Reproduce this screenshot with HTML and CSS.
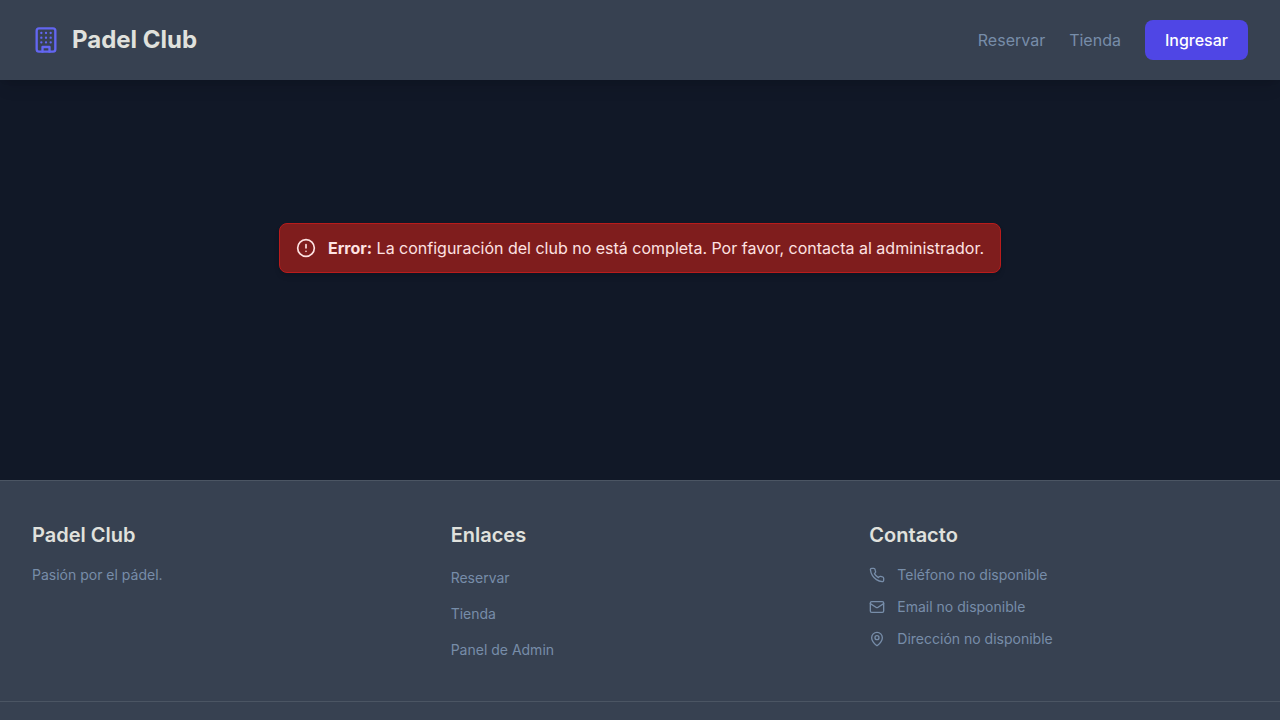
FILE: index.html
```html
<!DOCTYPE html>
<html lang="es">
<head>
<meta charset="utf-8">
<meta name="viewport" content="width=device-width, initial-scale=1">
<title>Padel Club</title>
<link rel="stylesheet" href="styles.css">
</head>
<body>
<header class="header">
  <a class="brand" href="#">
    <svg class="icon brand-icon" viewBox="0 0 24 24" aria-hidden="true"><rect x="4" y="2" width="16" height="20" rx="2" ry="2"/><path d="M9 22v-4h6v4M8 6h.01M16 6h.01M12 6h.01M12 10h.01M12 14h.01M16 10h.01M16 14h.01M8 10h.01M8 14h.01"/></svg>
    <span>Padel Club</span>
  </a>
  <nav class="nav">
    <a class="nav-link" href="#">Reservar</a>
    <a class="nav-link" href="#">Tienda</a>
    <button class="button" type="button">Ingresar</button>
  </nav>
</header>
<main class="main">
  <div class="alert" role="alert">
    <svg class="icon alert-icon" viewBox="0 0 24 24" aria-hidden="true"><circle cx="12" cy="12" r="10"/><path d="M12 8v4M12 16h.01"/></svg>
    <p class="alert-text"><strong>Error:</strong> La configuración del club no está completa. Por favor, contacta al administrador.</p>
  </div>
</main>
<footer class="footer">
  <div class="footer-grid">
    <section>
      <h2 class="footer-title">Padel Club</h2>
      <p class="footer-text">Pasión por el pádel.</p>
    </section>
    <section>
      <h2 class="footer-title">Enlaces</h2>
      <ul class="list">
        <li class="link-item"><a class="footer-link" href="#">Reservar</a></li>
        <li class="link-item"><a class="footer-link" href="#">Tienda</a></li>
        <li class="link-item"><a class="footer-link" href="#">Panel de Admin</a></li>
      </ul>
    </section>
    <section>
      <h2 class="footer-title">Contacto</h2>
      <ul class="list">
        <li class="contact"><svg class="icon contact-icon" viewBox="0 0 24 24" aria-hidden="true"><path d="M22 16.92v3a2 2 0 0 1-2.18 2 19.79 19.79 0 0 1-8.63-3.07 19.5 19.5 0 0 1-6-6 19.79 19.79 0 0 1-3.07-8.67A2 2 0 0 1 4.11 2h3a2 2 0 0 1 2 1.72 12.84 12.84 0 0 0 .7 2.81 2 2 0 0 1-.45 2.11L8.09 9.91a16 16 0 0 0 6 6l1.27-1.27a2 2 0 0 1 2.11-.45 12.84 12.84 0 0 0 2.81.7A2 2 0 0 1 22 16.92z"/></svg>Teléfono no disponible</li>
        <li class="contact"><svg class="icon contact-icon" viewBox="0 0 24 24" aria-hidden="true"><rect x="2" y="4" width="20" height="16" rx="2"/><path d="m22 7-8.97 5.7a1.94 1.94 0 0 1-2.06 0L2 7"/></svg>Email no disponible</li>
        <li class="contact"><svg class="icon contact-icon" viewBox="0 0 24 24" aria-hidden="true"><path d="M20 10c0 4.993-5.539 10.193-7.399 11.799a1 1 0 0 1-1.202 0C9.539 20.193 4 14.993 4 10a8 8 0 0 1 16 0"/><circle cx="12" cy="10" r="3"/></svg>Dirección no disponible</li>
      </ul>
    </section>
  </div>
  <div class="footer-bar"></div>
</footer>
</body>
</html>
```

FILE: styles.css
```css
* { box-sizing: border-box; }

body {
  margin: 0;
  min-height: 100vh;
  display: flex;
  flex-direction: column;
  background: #111827;
  color: #e0e1dd;
  font: 16px/24px Inter, sans-serif;
}

h2, p, ul { margin: 0; padding: 0; }
ul { list-style: none; }
a { color: inherit; text-decoration: none; }

.icon {
  flex-shrink: 0;
  fill: none;
  stroke: currentColor;
  stroke-width: 2;
  stroke-linecap: round;
  stroke-linejoin: round;
}

.header {
  display: flex;
  align-items: center;
  justify-content: space-between;
  padding: 20px 32px;
  background: #374151;
  box-shadow: 0 10px 15px -3px rgba(0, 0, 0, 0.1), 0 4px 6px -4px rgba(0, 0, 0, 0.1);
}

.brand {
  display: flex;
  align-items: center;
  gap: 12px;
  font-size: 24px;
  line-height: 32px;
  font-weight: 700;
}

.brand-icon { width: 28px; height: 28px; color: #6366f1; }

.nav { display: flex; align-items: center; gap: 24px; }
.nav-link { color: #778da9; }

.button {
  padding: 8px 20px;
  border: 0;
  border-radius: 8px;
  background: #4f46e5;
  color: #fff;
  font: inherit;
  font-weight: 500;
  cursor: pointer;
}

.main {
  flex-grow: 1;
  min-height: 336px;
  display: flex;
  align-items: center;
  justify-content: center;
}

.alert {
  display: flex;
  align-items: center;
  gap: 12px;
  padding: 12px 16px;
  border: 1px solid #b91c1c;
  border-radius: 8px;
  background: #7f1d1d;
  color: #fee2e2;
  box-shadow: 0 4px 6px -1px rgba(0, 0, 0, 0.1), 0 2px 4px -2px rgba(0, 0, 0, 0.1);
}

.alert-icon { width: 20px; height: 20px; }

.footer {
  margin-top: 64px;
  border-top: 1px solid #4b5563;
  background: #374151;
}

.footer-grid {
  display: grid;
  grid-template-columns: repeat(3, 1fr);
  gap: 40px;
  padding: 40px 32px;
}

.footer-title {
  margin-bottom: 16px;
  font-size: 20px;
  line-height: 28px;
  font-weight: 600;
}

.footer-text, .contact { color: #778da9; font-size: 14px; line-height: 20px; }
.footer-link { color: #778da9; font-size: 14px; line-height: 20px; }
.list { display: grid; gap: 12px; }
.contact { display: flex; align-items: center; gap: 12px; }
.contact-icon { width: 16px; height: 16px; }

.footer-bar {
  min-height: 19px;
  border-top: 1px solid #4b5563;
}
```
